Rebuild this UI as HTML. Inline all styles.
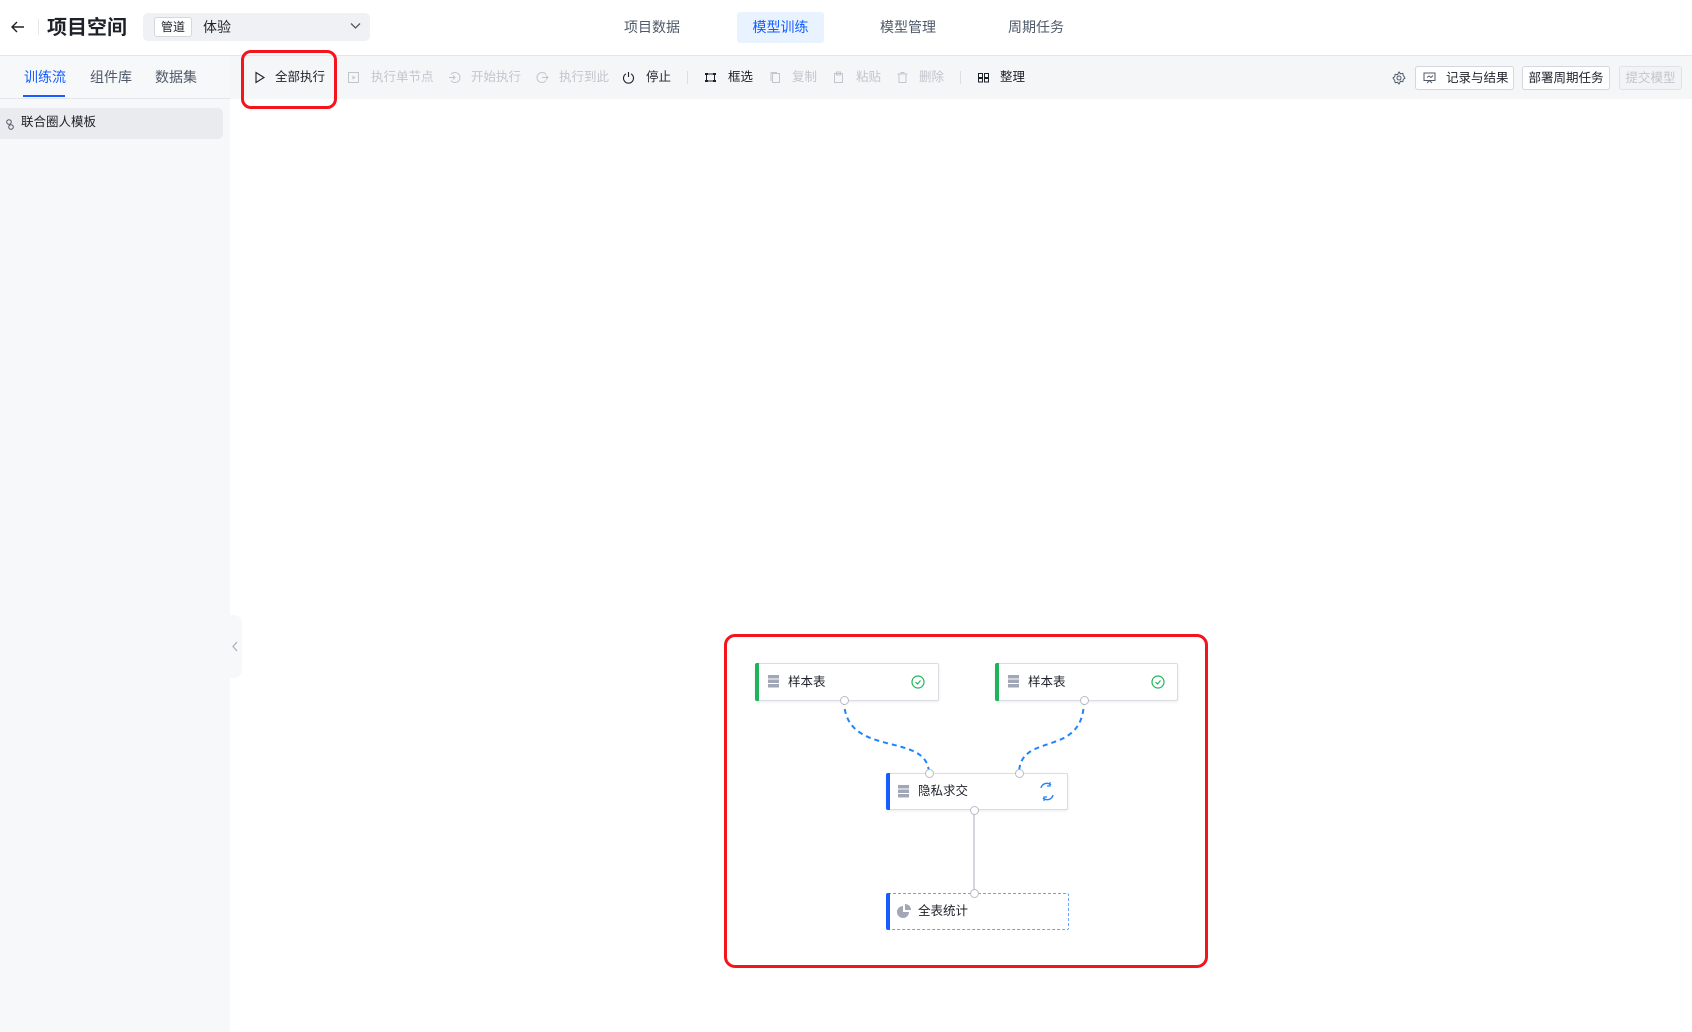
<!DOCTYPE html>
<html><head><meta charset="utf-8"><style>
*{margin:0;padding:0;box-sizing:border-box}
body{width:1692px;height:1032px;overflow:hidden;background:#fff;font-family:"Liberation Sans","Noto Sans CJK SC",sans-serif;color:#1d2129;position:relative}
.a{position:absolute}
.hdr{left:0;top:0;width:1692px;height:56px;border-bottom:1px solid #e5e6eb}
.tab{top:12px;height:31px;line-height:31px;font-size:14px;color:#4e5969;padding:0 15px}
.side{left:0;top:56px;width:230px;height:976px;background:#f7f8fa}
.tb{left:230px;top:56px;width:1462px;height:43px;background:#f5f6f8}
.ti{top:56px;height:43px;line-height:43px;font-size:12.5px;color:#1d2129;white-space:nowrap}
.dis{color:#c2c5cc}
.ic{top:71px;width:13px;height:13px}
.btn{top:66px;height:24px;line-height:22px;border:1px solid #d4d7dd;border-radius:3px;background:#fff;font-size:12.5px;text-align:center;white-space:nowrap;color:#1d2129}
.node{background:#fff;border:1px solid #d9dce3;border-radius:2px;box-shadow:0 1px 3px rgba(0,0,0,.08);font-size:12.5px;color:#1d2129}
.node .bar{position:absolute;left:-1px;top:-1px;bottom:-1px;width:4px;border-radius:2px 0 0 2px}
.port{width:9px;height:9px;border-radius:50%;background:#fff;border:1px solid #b8bcc6}
</style></head><body>
<div class="a hdr"></div>
<svg class="a" style="left:11px;top:20px" width="14" height="14" viewBox="0 0 14 14"><path d="M13 7H1M6 2L1 7l5 5" fill="none" stroke="#1d2129" stroke-width="1.4"/></svg>
<div class="a" style="left:38px;top:19px;width:1px;height:16px;background:#e5e6eb"></div>
<div class="a" style="left:47px;top:14px;font-size:20px;font-weight:bold;line-height:28px">项目空间</div>
<div class="a" style="left:143px;top:13px;width:227px;height:28px;background:#f0f1f4;border-radius:5px"></div>
<div class="a" style="left:154px;top:17px;height:20px;line-height:18px;padding:0 6px;border:1px solid #d4d7dd;border-radius:3px;background:#fff;font-size:12px">管道</div>
<div class="a" style="left:203px;top:17px;font-size:14px;line-height:20px">体验</div>
<svg class="a" style="left:350px;top:22px" width="11" height="8" viewBox="0 0 11 8"><path d="M1 1.5l4.5 4.5 4.5-4.5" fill="none" stroke="#4e5969" stroke-width="1.3"/></svg>
<div class="a tab" style="left:609px">项目数据</div>
<div class="a tab" style="left:737px;width:87px;text-align:center;background:#e8f3ff;color:#165dff;border-radius:3px;padding:0">模型训练</div>
<div class="a tab" style="left:865px">模型管理</div>
<div class="a tab" style="left:993px">周期任务</div>

<div class="a side"></div>
<div class="a" style="left:0;top:98px;width:230px;height:1px;background:#e5e6eb"></div>
<div class="a" style="left:24px;top:67px;font-size:14px;color:#165dff">训练流</div>
<div class="a" style="left:23px;top:95px;width:42px;height:2px;background:#165dff"></div>
<div class="a" style="left:90px;top:67px;font-size:14px;color:#4e5969">组件库</div>
<div class="a" style="left:155px;top:67px;font-size:14px;color:#4e5969">数据集</div>
<div class="a" style="left:0;top:108px;width:223px;height:31px;background:#eaebee;border-radius:0 5px 5px 0"></div>
<svg class="a" style="left:5px;top:118px" width="10" height="12" viewBox="0 0 10 12"><circle cx="4" cy="4" r="2.3" fill="none" stroke="#4e5969"/><circle cx="6" cy="9" r="2.3" fill="none" stroke="#4e5969"/></svg>
<div class="a" style="left:21px;top:114px;font-size:12.5px;line-height:16px">联合圈人模板</div>
<div class="a" style="left:230px;top:615px;width:12px;height:63px;background:#f7f8fa;border-radius:0 8px 8px 0"></div>
<svg class="a" style="left:231px;top:641px" width="8" height="11" viewBox="0 0 8 11"><path d="M6 1L2 5.5 6 10" fill="none" stroke="#a9aeb8" stroke-width="1.2"/></svg>

<div class="a tb"></div>
<svg class="a ic" style="left:253px" viewBox="0 0 13 13"><path d="M3 1.5v10l8-5z" fill="none" stroke="#1d2129" stroke-width="1.1"/></svg>
<div class="a ti" style="left:275px">全部执行</div>
<svg class="a ic" style="left:347px" viewBox="0 0 13 13"><rect x="1.5" y="1.5" width="10" height="10" fill="none" stroke="#c2c5cc"/><path d="M5.5 4.5v4l3-2z" fill="#c2c5cc"/></svg>
<div class="a ti dis" style="left:371px">执行单节点</div>
<svg class="a ic" style="left:448px" viewBox="0 0 13 13"><path d="M3 3.5A5 5 0 1 1 3 9.5M1 6.5h6M5 4.5l2 2-2 2" fill="none" stroke="#c2c5cc"/></svg>
<div class="a ti dis" style="left:471px">开始执行</div>
<svg class="a ic" style="left:536px" viewBox="0 0 13 13"><path d="M10 3.5A5 5 0 1 0 10 9.5M6 6.5h6M10 4.5l2 2-2 2" fill="none" stroke="#c2c5cc"/></svg>
<div class="a ti dis" style="left:559px">执行到此</div>
<svg class="a ic" style="left:622px" viewBox="0 0 13 13"><path d="M4 2.8a5 5 0 1 0 5 0M6.5 1v5" fill="none" stroke="#1d2129" stroke-width="1.1"/></svg>
<div class="a ti" style="left:646px">停止</div>
<div class="a" style="left:687px;top:71px;width:1px;height:13px;background:#dcdfe5"></div>
<svg class="a ic" style="left:704px" viewBox="0 0 13 13"><rect x="2.5" y="3" width="8" height="7" fill="none" stroke="#1d2129"/><rect x="1" y="2" width="3" height="2" fill="#1d2129"/><rect x="9" y="2" width="3" height="2" fill="#1d2129"/><rect x="1" y="9" width="3" height="2" fill="#1d2129"/><rect x="9" y="9" width="3" height="2" fill="#1d2129"/></svg>
<div class="a ti" style="left:728px">框选</div>
<svg class="a ic" style="left:769px" viewBox="0 0 13 13"><rect x="3.5" y="2.5" width="7" height="9" fill="none" stroke="#c2c5cc"/><path d="M2 10V1.5h6" fill="none" stroke="#c2c5cc"/></svg>
<div class="a ti dis" style="left:792px">复制</div>
<svg class="a ic" style="left:832px" viewBox="0 0 13 13"><rect x="2.5" y="2.5" width="8" height="9" fill="none" stroke="#c2c5cc"/><rect x="4.5" y="1" width="4" height="3" fill="none" stroke="#c2c5cc"/></svg>
<div class="a ti dis" style="left:856px">粘贴</div>
<svg class="a ic" style="left:896px" viewBox="0 0 13 13"><path d="M1.5 3h10M5 3V1.5h3V3M3 3v8.5h7V3" fill="none" stroke="#c2c5cc"/></svg>
<div class="a ti dis" style="left:919px">删除</div>
<div class="a" style="left:960px;top:71px;width:1px;height:13px;background:#dcdfe5"></div>
<svg class="a ic" style="left:977px" viewBox="0 0 13 13"><rect x="1.5" y="2.5" width="4" height="4" fill="none" stroke="#1d2129"/><rect x="7.5" y="2.5" width="4" height="4" fill="none" stroke="#1d2129"/><rect x="1.5" y="7.5" width="4" height="3.5" fill="none" stroke="#1d2129"/><rect x="7.5" y="7.5" width="4" height="3.5" fill="none" stroke="#1d2129"/></svg>
<div class="a ti" style="left:1000px">整理</div>
<svg class="a" style="left:1392px;top:71px" width="14" height="14" viewBox="0 0 14 14"><circle cx="7" cy="7" r="2" fill="none" stroke="#4e5969"/><path d="M7 1l1.5 1.8 2.3-.5.5 2.3L13 7l-1.7 1.4-.5 2.3-2.3-.5L7 13l-1.5-1.8-2.3.5-.5-2.3L1 7l1.7-1.4.5-2.3 2.3.5z" fill="none" stroke="#4e5969"/></svg>
<div class="a btn" style="left:1415px;width:99px;text-align:left;padding-left:30px">记录与结果</div>
<svg class="a" style="left:1423px;top:72px" width="13" height="12" viewBox="0 0 13 12"><rect x="1" y="1" width="11" height="7.5" fill="none" stroke="#4e5969"/><path d="M4 11l2.5-2.5L9 11M4 5.5l2-1.5 2 1.5 2-2" fill="none" stroke="#4e5969"/></svg>
<div class="a btn" style="left:1522px;width:88px">部署周期任务</div>
<div class="a btn" style="left:1619px;width:63px;background:#f2f3f5;color:#c2c5cc;border-color:#e0e2e7">提交模型</div>

<div class="a" style="left:241px;top:50px;width:96px;height:59px;border:3px solid #f5141c;border-radius:10px"></div>

<svg class="a" style="left:0;top:0" width="1692" height="1032">
<path d="M844 700 C844 760 929 730 929 774" fill="none" stroke="#1e83ff" stroke-width="2" stroke-dasharray="5,4"/>
<path d="M1084 700 C1084 760 1019 730 1019 774" fill="none" stroke="#1e83ff" stroke-width="2" stroke-dasharray="5,4"/>
<path d="M974 810V893" stroke="#b8bcc6" stroke-width="1.2"/>
</svg>

<div class="a node" style="left:755px;top:663px;width:184px;height:38px"><div class="bar" style="background:#20b45a"></div></div>
<div class="a node" style="left:995px;top:663px;width:183px;height:38px"><div class="bar" style="background:#20b45a"></div></div>
<div class="a node" style="left:886px;top:773px;width:182px;height:37px"><div class="bar" style="background:#165dff"></div></div>
<div class="a node" style="left:886px;top:893px;width:183px;height:37px;border:1px dashed #6aa1ff;box-shadow:none"><div class="bar" style="background:#165dff"></div></div>

<svg class="a" style="left:0;top:0" width="1692" height="1032">
<g fill="#a1a7b5"><rect x="768" y="675" width="11" height="3.5"/><rect x="768" y="679.5" width="11" height="3.5"/><rect x="768" y="684" width="11" height="3.5"/>
<rect x="1008" y="675" width="11" height="3.5"/><rect x="1008" y="679.5" width="11" height="3.5"/><rect x="1008" y="684" width="11" height="3.5"/>
<rect x="898" y="785" width="11" height="3.5"/><rect x="898" y="789.5" width="11" height="3.5"/><rect x="898" y="794" width="11" height="3.5"/>
<path d="M903 906a6 6 0 1 0 6 6h-6z"/><path d="M905 904v6h6a6 6 0 0 0-6-6z"/></g>
<circle cx="918" cy="682" r="6" fill="none" stroke="#20b45a" stroke-width="1.2"/><path d="M915.5 682l2 2 3-3.5" fill="none" stroke="#20b45a" stroke-width="1.2"/>
<circle cx="1158" cy="682" r="6" fill="none" stroke="#20b45a" stroke-width="1.2"/><path d="M1155.5 682l2 2 3-3.5" fill="none" stroke="#20b45a" stroke-width="1.2"/>
<path d="M1041 788a6 6 0 0 1 10-3M1053 795a6 6 0 0 1-10 3" fill="none" stroke="#1e83ff" stroke-width="1.4"/><path d="M1050 782v4h-3M1044 801v-4h3" fill="none" stroke="#1e83ff" stroke-width="1.2"/>
</svg>
<div class="a" style="left:788px;top:673px;font-size:12.5px;line-height:18px">样本表</div>
<div class="a" style="left:1028px;top:673px;font-size:12.5px;line-height:18px">样本表</div>
<div class="a" style="left:918px;top:782px;font-size:12.5px;line-height:18px">隐私求交</div>
<div class="a" style="left:918px;top:902px;font-size:12.5px;line-height:18px">全表统计</div>

<div class="a port" style="left:840px;top:696px"></div>
<div class="a port" style="left:1080px;top:696px"></div>
<div class="a port" style="left:925px;top:769px"></div>
<div class="a port" style="left:1015px;top:769px"></div>
<div class="a port" style="left:970px;top:806px"></div>
<div class="a port" style="left:970px;top:889px"></div>

<div class="a" style="left:724px;top:634px;width:484px;height:334px;border:3.5px solid #f5141c;border-radius:11px"></div>
</body></html>
